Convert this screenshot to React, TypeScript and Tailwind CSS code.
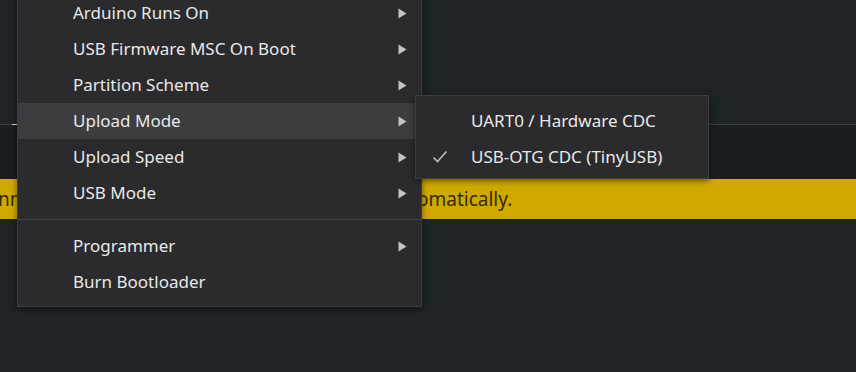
import React from 'react';

type Item = { label: string; arrow?: boolean; active?: boolean } | 'sep';

const items: Item[] = [
  { label: 'Arduino Runs On', arrow: true },
  { label: 'USB Firmware MSC On Boot', arrow: true },
  { label: 'Partition Scheme', arrow: true },
  { label: 'Upload Mode', arrow: true, active: true },
  { label: 'Upload Speed', arrow: true },
  { label: 'USB Mode', arrow: true },
  'sep',
  { label: 'Programmer', arrow: true },
  { label: 'Burn Bootloader' },
];

const Arrow = () => (
  <svg width="9" height="11" viewBox="0 0 9 11" className="shrink-0">
    <path d="M0.5 0.5 L8.5 5.5 L0.5 10.5 Z" fill="#c4c4c4" />
  </svg>
);

const Check = () => (
  <svg width="16" height="14" viewBox="0 0 16 14">
    <path d="M1.5 7.5 L5.5 11.5 L14.5 1.5" fill="none" stroke="#bcbcbc" strokeWidth="1.6" />
  </svg>
);

export default function App() {
  return (
    <div
      className="relative w-[856px] h-[372px] overflow-hidden bg-[#1f2427] text-[17px]"
      style={{ fontFamily: '"Noto Sans", "Open Sans", sans-serif' }}
    >
      {/* page behind the menu */}
      <div className="flex flex-col">
        <div className="h-[124px] bg-[#1e2326]" />
        <div className="h-px flex bg-[#3b4044]">
          <div className="w-[12px]" />
          <div className="w-[5px] bg-[#d8d8d8]" />
        </div>
        <div className="h-[54px] bg-[#1a1e21]" />
        <div className="h-[40px] bg-[#cfa800] flex items-center text-[19px] text-[#352c00]">
          <div className="w-[419px] -ml-[2px]">nn</div>
          <div>omatically.</div>
        </div>
        <div className="flex-1 bg-[#1f2427]" />
      </div>

      {/* main menu */}
      <div className="absolute left-[17px] top-[-6px] w-[405px] bg-[#2b2b2e] border border-[#3d3d40] shadow-[0_2px_6px_rgba(0,0,0,0.5)] pb-[6px] text-[#e8e8e8]">
        {items.map((it, i) =>
          it === 'sep' ? (
            <div key={i} className="h-[17px] flex items-center">
              <div className="h-px w-full bg-[#454548]" />
            </div>
          ) : (
            <div
              key={i}
              className={`h-[36px] flex items-center pl-[55px] pr-[8px] mr-[6px] ${it.active ? 'bg-[#3d3d40]' : ''}`}
            >
              <span className="flex-1">{it.label}</span>
              {it.arrow && <Arrow />}
            </div>
          )
        )}
      </div>

      {/* submenu */}
      <div className="absolute left-[415px] top-[95px] w-[294px] bg-[#2b2b2e] border border-[#3d3d40] shadow-[0_2px_6px_rgba(0,0,0,0.5)] pt-[7px] pb-[3px] text-[#e8e8e8]">
        <div className="h-[36px] flex items-center">
          <div className="w-[55px]" />
          <span>UART0 / Hardware CDC</span>
        </div>
        <div className="h-[36px] flex items-center">
          <div className="w-[55px] pl-[16px] flex items-center">
            <Check />
          </div>
          <span>USB-OTG CDC (TinyUSB)</span>
        </div>
      </div>
    </div>
  );
}
